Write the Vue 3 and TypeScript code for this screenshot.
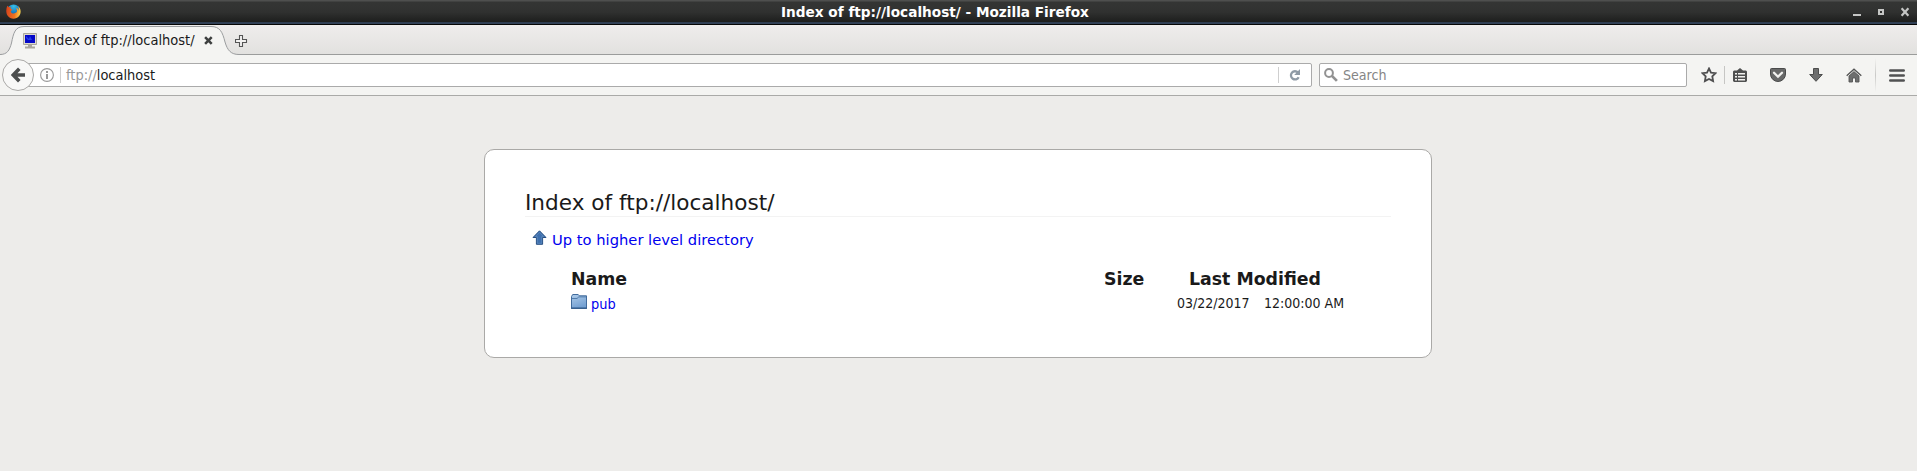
<script setup lang="ts">
interface Entry {
  name: string
  size: string
  date: string
  time: string
}

const title = 'Index of ftp://localhost/'
const entries: Entry[] = [{ name: 'pub', size: '', date: '03/22/2017', time: '12:00:00 AM' }]
</script>

<template>
  <div class="window">
    <header class="titlebar">
      <svg class="firefox" width="15" height="15" viewBox="0 0 15 15">
        <defs>
          <radialGradient id="globe" cx=".5" cy=".15" r=".9">
            <stop offset="0" stop-color="#35c0e8" />
            <stop offset=".55" stop-color="#1878bd" />
            <stop offset="1" stop-color="#143d78" />
          </radialGradient>
          <linearGradient id="fox" x1="0" y1=".4" x2="1" y2=".5">
            <stop offset="0" stop-color="#d8431c" />
            <stop offset=".6" stop-color="#ee7420" />
            <stop offset="1" stop-color="#fbd34a" />
          </linearGradient>
        </defs>
        <circle cx="7.6" cy="7" r="6.6" fill="url(#globe)" />
        <path d="M1.3 1.8 3 3.2 5 3 4.4 4.8 6.4 5.6 4.7 7.2C5 9.7 8 10.2 9.6 8.8 11.8 8 11 5 9.8 3.7 12 4.3 12.6 5.5 12.7 6.7 13.2 4.3 12.4 2.6 11.7 1.7 15.2 4 15.4 9 13.1 12 9.9 15.8 4.3 15.3 1.7 11.7-.2 8.9-.1 5 1.3 1.8Z" fill="url(#fox)" />
      </svg>
      <span class="window-title">{{ title }} - Mozilla Firefox</span>
      <svg class="window-controls" width="58" height="12" viewBox="0 0 58 12">
        <path d="M1 9h8" stroke="#c5c6c5" stroke-width="2" />
        <path d="M26 3h6v6h-6zM28 5v2h2V5z" fill="#c5c6c5" fill-rule="evenodd" />
        <path d="M49.6 2.3l6.8 7.4M56.4 2.3l-6.8 7.4" stroke="#c5c6c5" stroke-width="2.2" />
      </svg>
    </header>

    <div class="tabstrip">
      <div class="tab">
        <svg class="tab-shape" width="245" height="30" viewBox="0 0 245 30">
          <path d="M0 29.5C7 29.5 9.5 25.5 11.5 18 13.5 8 15 1.5 24 1.5H211C220 1.5 222.5 7 225 17 227.5 25.5 231 29.5 239 29.5H245V30H0Z" fill="#f4f4f2" />
          <path d="M0 29.5C7 29.5 9.5 25.5 11.5 18 13.5 8 15 1.5 24 1.5H211C220 1.5 222.5 7 225 17 227.5 25.5 231 29.5 239 29.5H245" fill="none" stroke="#9b9d9f" />
        </svg>
        <svg class="monitor" width="16" height="16" viewBox="0 0 16 16">
          <path d="M1.5.5h13v11h-13z" fill="#dcd9cf" stroke="#aaa69b" />
          <path d="M3 2h10v8H3z" fill="#0508c8" />
          <path d="M4 3l3 3 1-3 2 4H6L4 5z" fill="#345dfa" opacity=".65" />
          <path d="M6 12h4v1.5h3V15.5H3v-2h3z" fill="#aaa69c" />
        </svg>
        <span class="tab-title">{{ title }}</span>
        <svg class="tab-close" width="9" height="9" viewBox="0 0 9 9">
          <path d="M1.1 1.1l6.6 6.8M7.7 1.1L1.1 7.9" stroke="#3e4040" stroke-width="2.5" />
        </svg>
      </div>
      <svg class="new-tab" width="13" height="13" viewBox="0 0 13 13">
        <path d="M4.5.5h3v4h4v3h-4v4h-3v-4h-4v-3h4z" fill="#f3f2f1" stroke="#555" stroke-width="1.1" />
      </svg>
    </div>

    <nav class="toolbar">
      <button class="back" aria-label="Back">
        <svg width="14" height="16" viewBox="0 0 14 16">
          <path d="M8.3 1.8 2.3 8l6 6.2M2.3 8H14" fill="none" stroke="#4c4e4e" stroke-width="3.6" />
        </svg>
      </button>
      <div class="urlbar">
        <svg class="info" width="14" height="14" viewBox="0 0 14 14">
          <circle cx="7" cy="7" r="6.4" fill="none" stroke="#999" stroke-width="1.1" />
          <path d="M7 3v2M7 6v5" stroke="#999" stroke-width="2" />
        </svg>
        <i class="divider identity-line"></i>
        <span class="url"><span class="scheme">ftp://</span>localhost</span>
        <i class="divider"></i>
        <svg class="reload" width="12" height="13" viewBox="0 0 12 13">
          <path d="M9.7 8.2A4.1 4.1 0 1 1 9 3.5" fill="none" stroke="#8f9aa5" stroke-width="2.3" />
          <path d="M11 0v6H5.2z" fill="#8f9aa5" />
        </svg>
      </div>
      <div class="search">
        <svg width="14" height="14" viewBox="0 0 14 14">
          <circle cx="5" cy="5" r="3.9" fill="none" stroke="#929292" stroke-width="2" />
          <path d="M7.9 7.9l5 5" stroke="#929292" stroke-width="2.7" />
        </svg>
        <span>Search</span>
      </div>
      <div class="actions">
        <svg class="star" width="16" height="16" viewBox="0 0 16 16">
          <path d="M8 1.5 10 5.6l4.6.6-3.3 3.2.8 4.7L8 11.9l-4.1 2.2.8-4.7L1.4 6.2 6 5.6z" fill="#f4f4f2" stroke="#4f4f50" stroke-width="1.8" />
        </svg>
        <i class="action-line"></i>
        <svg class="list" width="14" height="15" viewBox="0 0 14 15">
          <path d="M1 2.5h3L7 0l3 2.5h3l1 1V13l-1 1H1l-1-1V3.5z" fill="#505151" />
          <path d="M2 5h2v1.6H2zM5 5h7v1.6H5zM2 8h2v1.6H2zM5 8h7v1.6H5zM2 11h2v1.4H2zM5 11h7v1.4H5z" fill="#f2f2f0" />
        </svg>
        <svg class="pocket" width="16" height="14" viewBox="0 0 16 14">
          <path d="M1.5.5h13q1 0 1 1V6a7.5 7.5 0 0 1-15 0V1.5q0-1 1-1z" fill="#686969" stroke="#4a4b4b" />
          <path d="M4 4.7l4 4 4-4" fill="none" stroke="#f2f2f0" stroke-width="2.3" stroke-linecap="round" />
        </svg>
        <svg class="download" width="14" height="14" viewBox="0 0 14 14">
          <path d="M4.5.5h5v6h3.8L7 13.3.7 6.5h3.8z" fill="#6d6e6e" stroke="#4c4d4d" />
        </svg>
        <svg class="home" width="16" height="15" viewBox="0 0 16 15">
          <path d="M3 8 8 3.6 13 8v6H9.5v-4h-3v4H3z" fill="#6d6e6e" stroke="#555656" stroke-width=".9" />
          <path d="M.7 7.8 8 1.3l7.3 6.5" fill="none" stroke="#555656" stroke-width="1.4" />
        </svg>
        <i class="menu-line"></i>
        <svg class="menu" width="16" height="13" viewBox="0 0 16 13">
          <path d="M1.3 1.5h13.4M1.3 6.5h13.4M1.3 11.5h13.4" stroke="#515253" stroke-width="2.6" stroke-linecap="round" />
        </svg>
      </div>
    </nav>

    <main class="page">
      <section class="listing">
        <h1>{{ title }}</h1>
        <p class="up">
          <svg width="15" height="15" viewBox="0 0 15 15">
            <path d="M7.5.8 14 7.5h-3.4v6.8H4.4V7.5H1z" fill="#3e70ae" stroke="#274f82" />
            <path d="M7.5 2.3 11.6 6.6H9.7v6.7H5.3V6.6H3.4z" fill="none" stroke="#6892c2" stroke-width=".6" />
          </svg>
          <a>Up to higher level directory</a>
        </p>
        <div class="row head">
          <span>Name</span>
          <span class="size">Size</span>
          <span class="modified">Last Modified</span>
        </div>
        <div v-for="entry in entries" :key="entry.name" class="row entry">
          <span class="file">
            <svg width="16" height="15" viewBox="0 0 16 15">
              <defs>
                <linearGradient id="folder" x2=".4" y2="1">
                  <stop stop-color="#b0cdea" />
                  <stop offset="1" stop-color="#75a1d2" />
                </linearGradient>
              </defs>
              <path d="M.5 14V2.5l1.2-2h5.5l1.2 1.3h7.1V14z" fill="url(#folder)" stroke="#416b9c" />
              <path d="M1 4.5h5l1.8-1.6H15" fill="none" stroke="#527cab" />
              <path d="M0 14.3h16" stroke="#1f4b7f" />
            </svg>
            <a>{{ entry.name }}</a>
          </span>
          <span class="size">{{ entry.size }}</span>
          <span class="date">{{ entry.date }}</span>
          <span class="time">{{ entry.time }}</span>
        </div>
      </section>
    </main>
  </div>
</template>

<style>
body {
  margin: 0;
  background: #edecea;
}
</style>

<style scoped>
.window {
  height: 471px;
  overflow: hidden;
  font-family: "DejaVu Sans", sans-serif;
  color: #1a1a1a;
}
svg {
  display: block;
  flex: none;
}
.titlebar {
  box-sizing: border-box;
  height: 25px;
  display: grid;
  grid-template-columns: 781px auto 1fr;
  align-items: start;
  background: linear-gradient(#4e4f4e 0, #4e4f4e 1px, #343534 2px, #303130 12px, #1d1e1d 22px, #2c3a4e 22px, #34445a 24px, #050505 24px);
}
.firefox {
  margin: 4px 0 0 6px;
}
.window-title {
  font-weight: bold;
  font-size: 13.65px;
  line-height: 24px;
  color: #fff;
  white-space: nowrap;
}
.window-controls {
  justify-self: end;
  margin: 6px 7px 0 0;
}
.tabstrip {
  box-sizing: border-box;
  height: 30px;
  display: flex;
  background: linear-gradient(#efedec, #e2e1df);
  border-bottom: 1px solid #9b9c9b;
}
.tab {
  position: relative;
  width: 235px;
  height: 30px;
  display: flex;
}
.tab-shape {
  position: absolute;
  left: 0;
  top: 0;
}
.monitor {
  position: relative;
  margin: 8px 6px 0 22px;
}
.tab-title {
  position: relative;
  width: 160px;
  line-height: 30px;
  font-family: "DejaVu Sans Condensed", "DejaVu Sans", sans-serif;
  font-size: 14.5px;
  font-stretch: condensed;
  white-space: nowrap;
}
.tab-close {
  position: relative;
  margin-top: 11px;
}
.new-tab {
  margin: 10px 0 0 0;
}
.toolbar {
  position: relative;
  box-sizing: border-box;
  height: 41px;
  display: flex;
  align-items: flex-start;
  background: #f4f4f2;
  border-bottom: 1px solid #aaaaa8;
  font-family: "DejaVu Sans Condensed", "DejaVu Sans", sans-serif;
  font-stretch: condensed;
}
.back {
  z-index: 1;
  box-sizing: border-box;
  width: 32px;
  height: 32px;
  margin: 4px 0 0 2px;
  padding: 0;
  display: grid;
  place-items: center;
  border: 1px solid #aaa9a7;
  border-radius: 50%;
  background: #f8f8f7;
}
.urlbar,
.search {
  box-sizing: border-box;
  height: 24px;
  margin-top: 8px;
  display: flex;
  align-items: center;
  background: #fff;
  border: 1px solid #aaa;
  border-radius: 2px;
}
.urlbar {
  width: 1290px;
  margin-left: -12px;
}
.info {
  margin-left: 17px;
}
.divider {
  width: 1px;
  height: 16px;
  background: #cfcfcf;
}
.identity-line {
  margin: 0 5px 0 6px;
}
.url {
  flex: 1;
  font-size: 14.45px;
}
.scheme {
  color: #999;
}
.reload {
  margin: 0 10px;
}
.search {
  width: 368px;
  margin-left: 7px;
  padding-left: 4px;
  gap: 5px;
  font-size: 14.1px;
  color: #858585;
}
.actions {
  flex: 1;
  height: 40px;
  display: flex;
  align-items: center;
}
.star {
  margin-left: 14px;
}
.action-line {
  width: 1px;
  height: 18px;
  margin: 0 8px 0 7px;
  background: #c6c6c4;
}
.pocket {
  margin-left: 23px;
}
.download {
  margin-left: 23px;
}
.home {
  margin-left: 23px;
}
.menu-line {
  width: 1px;
  height: 34px;
  margin: 0 13px;
  background: linear-gradient(transparent, #c9c9c7 50%, transparent);
}
.page {
  padding-top: 53px;
  background: #edecea;
}
.listing {
  box-sizing: border-box;
  width: 948px;
  height: 209px;
  margin-left: 484px;
  padding: 40px;
  background: #fff;
  border: 1px solid #aaa9a7;
  border-radius: 10px;
}
h1 {
  box-sizing: border-box;
  height: 27px;
  margin: 0;
  border-bottom: 1px solid #f3f3f3;
  font-size: 21.6px;
  font-weight: normal;
  line-height: 25px;
}
.up {
  display: flex;
  margin: 12px 0 0 7px;
  gap: 5px;
  height: 22px;
  line-height: 22px;
  font-size: 14.73px;
}
.up a,
.file a {
  color: #0000ee;
}
.up svg {
  margin-top: 1px;
}
.row {
  display: flex;
  margin-left: 46px;
  white-space: nowrap;
}
.row > :first-child {
  width: 533px;
}
.head {
  height: 22px;
  margin-top: 17px;
  font-size: 17.35px;
  font-weight: bold;
  line-height: 22px;
}
.size {
  width: 85px;
}
.entry {
  height: 24px;
  font-family: "DejaVu Sans Condensed", "DejaVu Sans", sans-serif;
  font-stretch: condensed;
  font-size: 14px;
  line-height: 26px;
}
.file {
  display: flex;
  gap: 4px;
}
.file a {
  font-size: 14.4px;
  line-height: 28px;
}
.file svg {
  margin-top: 4px;
}
.entry .size {
  width: 73px;
}
.date {
  width: 87px;
}
</style>
